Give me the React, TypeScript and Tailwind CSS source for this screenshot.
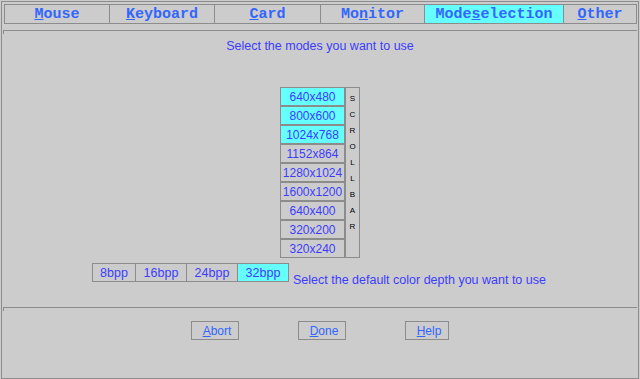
import type React from 'react';

const tabs: { label: React.ReactNode; width: string; active?: boolean }[] = [
  { label: <><u>M</u>ouse</>, width: 'w-[105px]' },
  { label: <><u>K</u>eyboard</>, width: 'w-[105px]' },
  { label: <><u>C</u>ard</>, width: 'w-[106px]' },
  { label: <>Mo<u>n</u>itor</>, width: 'w-[104px]' },
  { label: <>Mode<u>s</u>election</>, width: 'w-[139px]', active: true },
  { label: <><u>O</u>ther</>, width: 'w-[73px]' },
];

const modes = [
  { label: '640x480', on: true },
  { label: '800x600', on: true },
  { label: '1024x768', on: true },
  { label: '1152x864' },
  { label: '1280x1024' },
  { label: '1600x1200' },
  { label: '640x400' },
  { label: '320x200' },
  { label: '320x240' },
];

const depths = [
  { label: '8bpp', width: 'w-[42px]' },
  { label: '16bpp', width: 'w-[51px]' },
  { label: '24bpp', width: 'w-[51px]' },
  { label: '32bpp', width: 'w-[51px]', on: true },
];

export default function App() {
  return (
    <div className="h-[379px] w-[640px] bg-[#cccccc] p-px font-['Liberation_Sans',Arial,sans-serif] text-[12.5px] leading-[14px] text-[#3c3cff]">
      <div className="flex h-[378px] w-[638px] flex-col border border-[#8c8c8c]">
        <div className="ml-[2px] mt-[2px] flex h-[20px] w-[633px] border border-l-0 border-[#8c8c8c] pt-px font-['Liberation_Mono',monospace] text-[15px] font-bold text-[#3366ff]">
          {tabs.map((tab, i) => (
            <div
              key={i}
              className={`${tab.width} -mt-px flex items-center justify-center border-l border-[#8c8c8c] pt-px ${tab.active ? 'bg-[#66ffff]' : ''}`}
            >
              {tab.label}
            </div>
          ))}
        </div>

        <div className="ml-px mt-[6px] h-[4px] w-[634px] border-l border-t border-[#8c8c8c]" />

        <p className="mt-[5px] text-center">Select the modes you want to use</p>

        <div className="mt-[34px] flex justify-center">
          <div className="flex">
            <div className="flex w-[65px] flex-col">
              {modes.map((m) => (
                <div
                  key={m.label}
                  className={`flex h-[19px] items-center justify-center border border-[#8c8c8c] text-[12px] ${m.on ? 'bg-[#66ffff]' : ''}`}
                >
                  {m.label}
                </div>
              ))}
            </div>
            <div className="flex h-[171px] w-[15px] flex-col items-center border border-[#8c8c8c] pt-[3px] text-[8px] leading-[16px] text-black">
              {'SCROLLBAR'.split('').map((c, i) => (
                <span key={i}>{c}</span>
              ))}
            </div>
          </div>
        </div>

        <div className="mt-[5px] flex items-start gap-[4px] pl-[90px]">
          <div className="flex h-[19px] w-[197px] border border-[#8c8c8c]">
            {depths.map((d, i) => (
              <div
                key={d.label}
                className={`${d.width} flex items-center justify-center ${i > 0 ? 'border-l border-[#8c8c8c]' : ''} ${d.on ? 'bg-[#66ffff]' : ''}`}
              >
                {d.label}
              </div>
            ))}
          </div>
          <p className="pt-[10px]">Select the default color depth you want to use</p>
        </div>

        <div className="ml-px mt-[20px] h-[4px] w-[634px] border-l border-t border-[#8c8c8c]" />

        <div className="mt-[10px] flex justify-center gap-[59px] text-[12px] text-[#3366ff]">
          <button className="flex h-[19px] w-[48px] items-center justify-center border border-[#8c8c8c] pl-1">
            <span><u>A</u>bort</span>
          </button>
          <button className="flex h-[19px] w-[48px] items-center justify-center border border-[#8c8c8c] pl-1">
            <span><u>D</u>one</span>
          </button>
          <button className="flex h-[19px] w-[44px] items-center justify-center border border-[#8c8c8c] pl-1">
            <span><u>H</u>elp</span>
          </button>
        </div>
      </div>
    </div>
  );
}
